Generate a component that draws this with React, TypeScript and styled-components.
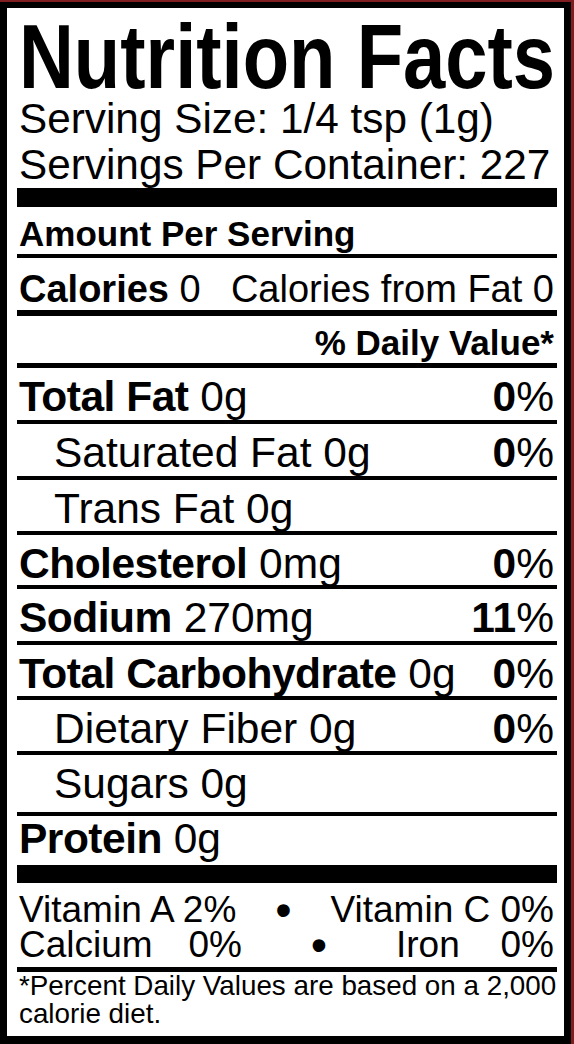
import React from 'react'
import styled, { createGlobalStyle } from 'styled-components'

const GlobalStyle = createGlobalStyle`
  html, body {
    margin: 0;
    padding: 0;
    background: #7f1d20;
  }

  body {
    font-family: "Liberation Sans", Arial, Helvetica, sans-serif;
    color: #000;
  }
`

const Label = styled.section`
  box-sizing: border-box;
  width: 571px;
  height: 1042px;
  margin-top: 2px;
  padding: 10px 7px 0 10px;
  border-style: solid;
  border-color: #000;
  border-width: 6px 7px 8px 7px;
  background: #fff;
  display: flex;
  flex-direction: column;
  overflow: hidden;
`

const TitleBox = styled.div`
  flex: none;
  height: 78px;
`

const Title = styled.h1`
  display: inline-block;
  margin: 0 0 0 2px;
  font-size: 91px;
  font-weight: 700;
  line-height: 78px;
  white-space: nowrap;
  transform: scaleX(0.835);
  transform-origin: left center;
`

const ServingLine = styled.div`
  padding-left: 2px;
  font-size: 42.3px;
  line-height: 46px;
  white-space: nowrap;
`

const Rule = styled.div<{ $h: number }>`
  flex: none;
  height: ${p => p.$h}px;
  background: #000;
`

const TextRow = styled.div<{ $h: number; $pt: number }>`
  box-sizing: border-box;
  flex: none;
  height: ${p => p.$h}px;
  padding: ${p => p.$pt}px 3px 0 2px;
  display: flex;
  justify-content: space-between;
  align-items: flex-start;
  white-space: nowrap;
`

const HeadRow = styled(TextRow)<{ $align?: string }>`
  justify-content: ${p => p.$align || 'flex-start'};
  font-size: 35px;
  font-weight: 700;
  line-height: 34px;
`

const CaloriesRow = styled(TextRow)`
  font-size: 38px;
  line-height: 38px;
`

const NutrientRow = styled(TextRow)<{ $indent: boolean }>`
  padding-left: ${p => (p.$indent ? 37 : 2)}px;
  font-size: 42.5px;
  line-height: 42px;
`

const Strong = styled.b`
  font-weight: 700;
`

const NutrientName = styled.b`
  font-weight: 700;
  letter-spacing: -0.5px;
`

const VitaminBlock = styled.div`
  box-sizing: border-box;
  flex: none;
  height: 84px;
  padding: 9px 3px 0 2px;
  font-size: 37px;
  line-height: 35px;
  white-space: nowrap;
`

const VitaminLine = styled.div`
  display: flex;
  justify-content: space-between;
  align-items: center;
  height: 35px;
`

const VitaminCell = styled.div<{ $w?: number }>`
  display: flex;
  justify-content: space-between;
  width: ${p => (p.$w ? `${p.$w}px` : 'auto')};
`

const Bullet = styled.span`
  font-size: 44px;
  font-weight: 700;
  line-height: 35px;
`

const Footnote = styled.p`
  margin: 0;
  padding-left: 2px;
  font-size: 27.8px;
  line-height: 28px;
`

interface Nutrient {
  name: string
  amount: string
  dv?: string
  sub?: boolean
  h: number
  pt?: number
}

const nutrients: Nutrient[] = [
  { name: 'Total Fat', amount: '0g', dv: '0', h: 52 },
  { name: 'Saturated Fat', amount: '0g', dv: '0', sub: true, h: 52 },
  { name: 'Trans Fat', amount: '0g', sub: true, h: 51 },
  { name: 'Cholesterol', amount: '0mg', dv: '0', h: 50 },
  { name: 'Sodium', amount: '270mg', dv: '11', h: 52 },
  { name: 'Total Carbohydrate', amount: '0g', dv: '0', h: 51 },
  { name: 'Dietary Fiber', amount: '0g', dv: '0', sub: true, h: 51 },
  { name: 'Sugars', amount: '0g', sub: true, h: 57 },
  { name: 'Protein', amount: '0g', h: 49, pt: 2 },
]

const App: React.FC = () => {
  return (
    <>
      <GlobalStyle />
      <Label>
        <TitleBox>
          <Title>Nutrition Facts</Title>
        </TitleBox>
        <ServingLine>Serving Size: 1/4 tsp (1g)</ServingLine>
        <ServingLine>Servings Per Container: 227</ServingLine>
        <Rule $h={19} />
        <HeadRow $h={47} $pt={10}>Amount Per Serving</HeadRow>
        <Rule $h={4} />
        <CaloriesRow $h={52} $pt={12}>
          <span>
            <Strong>Calories</Strong> 0
          </span>
          <span>Calories from Fat 0</span>
        </CaloriesRow>
        <Rule $h={6} />
        <HeadRow $h={47} $pt={10} $align="flex-end">
          % Daily Value*
        </HeadRow>
        <Rule $h={5} />
        {nutrients.map((n, i) => (
          <React.Fragment key={n.name}>
            <NutrientRow $h={n.h} $pt={n.pt ?? 8} $indent={!!n.sub}>
              <span>
                {n.sub ? n.name : <NutrientName>{n.name}</NutrientName>}{' '}
                {n.amount}
              </span>
              {n.dv && (
                <span>
                  <Strong>{n.dv}</Strong>%
                </span>
              )}
            </NutrientRow>
            <Rule $h={i === nutrients.length - 1 ? 18 : 4} />
          </React.Fragment>
        ))}
        <VitaminBlock>
          <VitaminLine>
            <VitaminCell>Vitamin A 2%</VitaminCell>
            <Bullet>•</Bullet>
            <VitaminCell>Vitamin C 0%</VitaminCell>
          </VitaminLine>
          <VitaminLine>
            <VitaminCell $w={223}>
              <span>Calcium</span>
              <span>0%</span>
            </VitaminCell>
            <Bullet>•</Bullet>
            <VitaminCell $w={158}>
              <span>Iron</span>
              <span>0%</span>
            </VitaminCell>
          </VitaminLine>
        </VitaminBlock>
        <Rule $h={5} />
        <Footnote>
          *Percent Daily Values are based on a 2,000 calorie diet.
        </Footnote>
      </Label>
    </>
  )
}

export default App
